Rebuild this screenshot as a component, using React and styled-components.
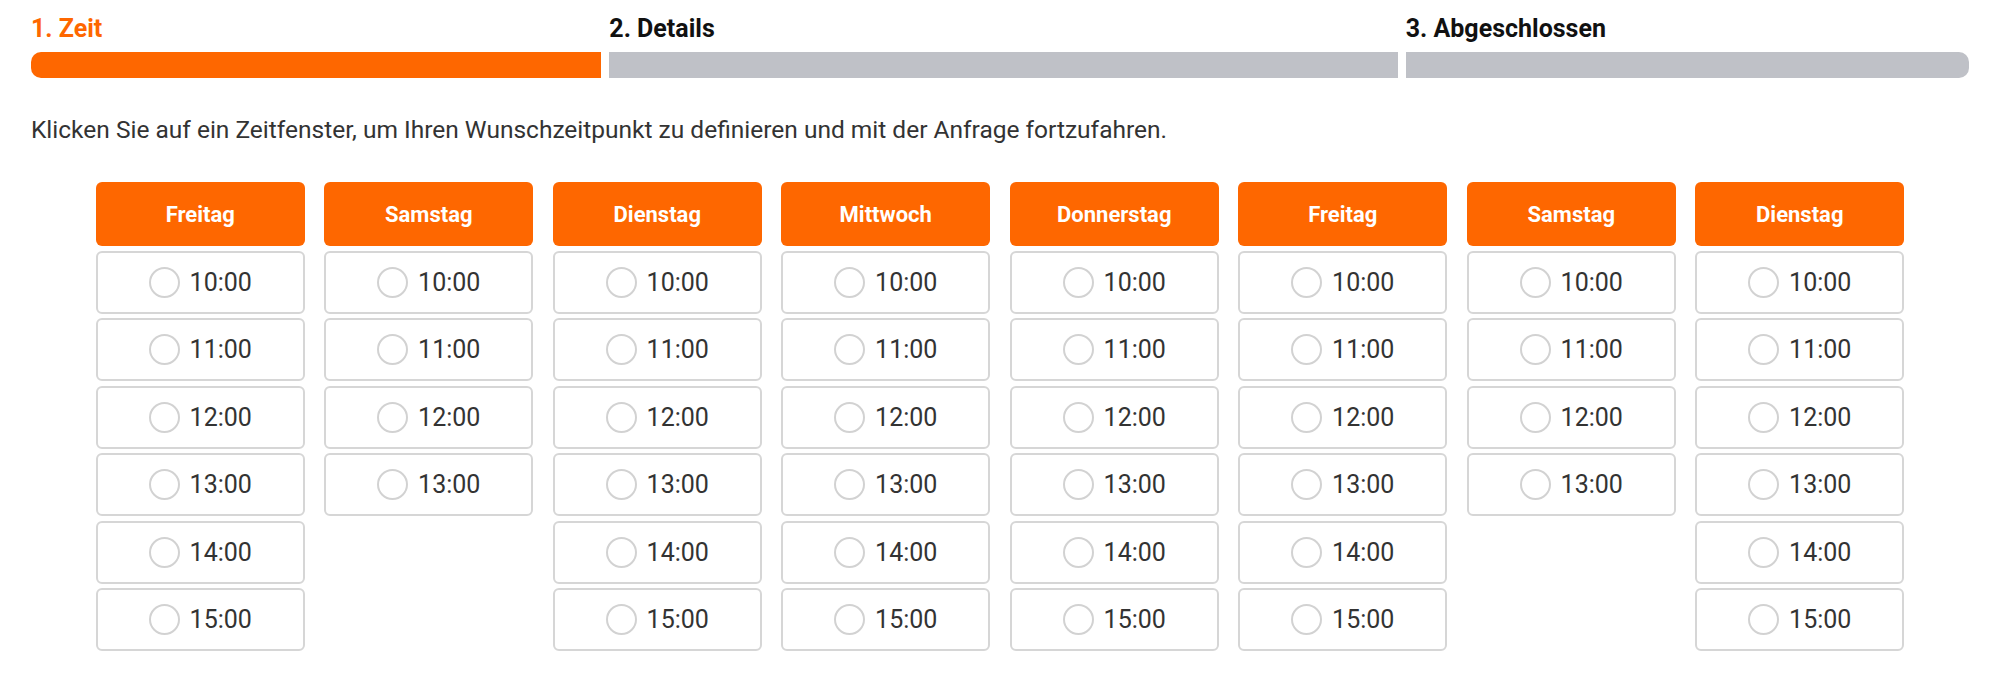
import React from "react";
import styled, { createGlobalStyle } from "styled-components";

const ORANGE = "#fe6700";

const GlobalStyle = createGlobalStyle`
    body {
        margin: 0;
        background: #fff;
        font-family: Roboto, "Liberation Sans", sans-serif;
        color: #333;
    }
`;

const Page = styled.div`
    padding: 14px 31px 0;
`;

const Steps = styled.div`
    display: flex;
    gap: 8px;
`;

const Step = styled.div`
    flex: ${({ $grow }) => $grow} 1 0;
    display: flex;
    flex-direction: column;
`;

const StepLabel = styled.div`
    font-size: 25px;
    font-weight: 700;
    line-height: 30px;
    margin-bottom: 8px;
    color: ${({ $active }) => ($active ? ORANGE : "#111")};
`;

const StepBar = styled.div`
    height: 26px;
    background: ${({ $active }) => ($active ? ORANGE : "#bfc1c7")};
    border-radius: ${({ $first, $last }) =>
        `${$first ? 10 : 0}px ${$last ? 10 : 0}px ${$last ? 10 : 0}px ${$first ? 10 : 0}px`};
`;

const Intro = styled.p`
    margin: 37px 0 0;
    font-size: 24.5px;
    line-height: 30px;
    font-weight: 400;
    color: #333;
`;

const Days = styled.div`
    display: grid;
    grid-template-columns: repeat(8, 209px);
    column-gap: 19.5px;
    justify-content: center;
    align-items: start;
    margin-top: 37px;
`;

const DayColumn = styled.div`
    display: flex;
    flex-direction: column;
    gap: 4.5px;
`;

const DayHeader = styled.div`
    height: 64px;
    display: flex;
    align-items: center;
    justify-content: center;
    background: ${ORANGE};
    border-radius: 6px;
    color: #fff;
    font-size: 22px;
    font-weight: 700;
`;

const Slot = styled.label`
    box-sizing: border-box;
    height: 63px;
    display: flex;
    align-items: center;
    justify-content: center;
    gap: 10px;
    border: 2px solid #d6d6d6;
    border-radius: 6px;
    background: #fff;
    cursor: pointer;
`;

const Radio = styled.span`
    box-sizing: border-box;
    width: 31px;
    height: 31px;
    border: 2px solid #d2d2d2;
    border-radius: 50%;
`;

const Time = styled.span`
    font-size: 25px;
    color: #333;
`;

const steps = [
    { label: "1. Zeit", grow: 570, active: true },
    { label: "2. Details", grow: 788 },
    { label: "3. Abgeschlossen", grow: 563 },
];

const times = ["10:00", "11:00", "12:00", "13:00", "14:00", "15:00"];

const days = [
    { name: "Freitag", slots: 6 },
    { name: "Samstag", slots: 4 },
    { name: "Dienstag", slots: 6 },
    { name: "Mittwoch", slots: 6 },
    { name: "Donnerstag", slots: 6 },
    { name: "Freitag", slots: 6 },
    { name: "Samstag", slots: 4 },
    { name: "Dienstag", slots: 6 },
];

export default function App() {
    return (
        <Page>
            <GlobalStyle />
            <Steps>
                {steps.map((s, i) => (
                    <Step key={s.label} $grow={s.grow}>
                        <StepLabel $active={s.active}>{s.label}</StepLabel>
                        <StepBar
                            $active={s.active}
                            $first={i === 0}
                            $last={i === steps.length - 1}
                        />
                    </Step>
                ))}
            </Steps>
            <Intro>
                Klicken Sie auf ein Zeitfenster, um Ihren Wunschzeitpunkt zu definieren und mit der Anfrage fortzufahren.
            </Intro>
            <Days>
                {days.map((d, i) => (
                    <DayColumn key={i}>
                        <DayHeader>{d.name}</DayHeader>
                        {times.slice(0, d.slots).map((t) => (
                            <Slot key={t}>
                                <Radio />
                                <Time>{t}</Time>
                            </Slot>
                        ))}
                    </DayColumn>
                ))}
            </Days>
        </Page>
    );
}
